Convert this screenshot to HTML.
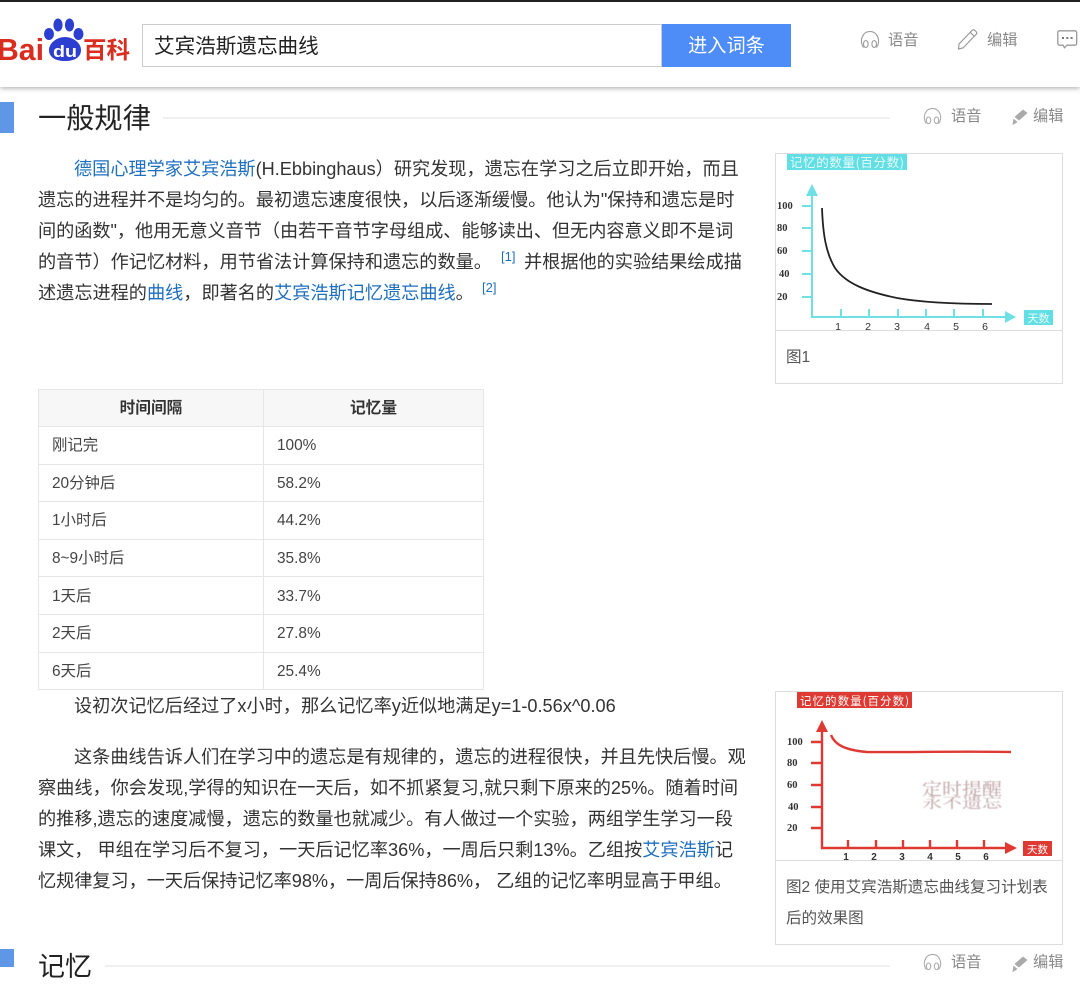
<!DOCTYPE html>
<html lang="zh-CN"><head><meta charset="utf-8"><title>艾宾浩斯遗忘曲线</title>
<style>
html,body{margin:0;padding:0;background:#fff}
body{position:relative;width:1080px;height:967px;overflow:hidden;font-family:"Liberation Sans","Noto Sans CJK SC",sans-serif;color:#333}
.t{position:absolute;white-space:nowrap;font-size:18.17px;line-height:30px;height:30px;color:#333}
a{color:#1f6fbf;text-decoration:none}
sup{position:absolute;font-size:13px;line-height:16px;color:#1f6fbf}
.abs{position:absolute}
.g{position:absolute;white-space:nowrap;font-size:15.2px;line-height:20px;color:#888}
.box{position:absolute;box-sizing:border-box;border:1px solid #ddd;background:#fff}
.cap{position:absolute;white-space:nowrap;font-size:15.55px;line-height:20px;color:#555}
table{position:absolute;left:38px;top:389px;width:446px;border-collapse:collapse;table-layout:fixed;font-size:15.4px;color:#444}
td,th{border:1px solid #e6e6e6;line-height:20px;text-align:left;font-weight:normal}
td{padding:2px 0 0 13px;height:34.6px}
th{background:#f7f7f7;text-align:center;font-weight:bold;padding:2px 0 0 0;height:34px;color:#333;font-size:15.7px}
svg.img{filter:blur(.35px)}
</style></head><body>

<div class="abs" style="left:0;top:0;width:1080px;height:87px;background:#fff;box-shadow:0 1px 5px rgba(0,0,0,.35)"></div>
<div class="abs" style="left:0;top:0;width:1080px;height:2px;background:#222"></div>

<svg class="abs" style="left:0;top:0" width="135" height="70" viewBox="0 0 135 70">
<g fill="#2c3fd0"><ellipse cx="58" cy="25" rx="4.600" ry="6.500"/><ellipse cx="69.500" cy="25" rx="4.600" ry="6.500"/><ellipse cx="49" cy="34" rx="5" ry="6"/><ellipse cx="78.500" cy="34" rx="5" ry="6"/>
<path d="M65 37C73 37 81 43 81 50C81 57 75 61 65 61C55 61 49 57 49 50C49 43 57 37 65 37Z"/></g>
<text x="-3" y="60" font-family="Liberation Sans" font-weight="bold" font-size="31" fill="#d92d20" textLength="47" lengthAdjust="spacingAndGlyphs">Bai</text>
<text x="53" y="57" font-family="Liberation Sans" font-weight="bold" font-size="17" fill="#fff" textLength="24" lengthAdjust="spacingAndGlyphs">du</text>
<text x="83" y="58" font-family="Noto Sans CJK SC" font-weight="bold" font-size="23.500" fill="#d92d20">百科</text>
</svg>

<div class="abs" style="left:142px;top:24px;width:520px;height:43px;box-sizing:border-box;border:1px solid #ccc;background:#fff"></div>
<div class="t" style="left:154px;top:32px;font-size:20.6px;color:#222">艾宾浩斯遗忘曲线</div>
<div class="abs" style="left:662px;top:24px;width:129px;height:43px;background:#4e8cf8;color:#fff;font-size:19.2px;line-height:45px;text-align:center">进入词条</div>

<svg class="abs" style="left:860px;top:30px" width="20" height="20" viewBox="0 0 20 20" fill="none" stroke="#999" stroke-width="1.100"><path d="M3.500 17.500C1 14 1 10 2 7.500C3.500 3.500 6.500 1.500 10 1.500S16.500 3.500 18 7.500C19 10 19 14 16.500 17.500"/><ellipse cx="5.800" cy="14" rx="2.300" ry="3.500"/><ellipse cx="14.200" cy="14" rx="2.300" ry="3.500"/></svg>
<div class="g" style="left:888px;top:31px">语音</div>
<svg class="abs" style="left:957px;top:28px" width="22" height="22" viewBox="0 0 22 22" fill="none" stroke="#999" stroke-width="1.200"><path d="M2 16L15 2.500c1-1 2-1 3 0l1 1c1 1 1 2 0 3L6 20l-4.500 1z"/><path d="M13.500 4.500l4 4"/></svg>
<div class="g" style="left:987px;top:31px">编辑</div>
<svg class="abs" style="left:1057px;top:30px" width="21" height="19" viewBox="0 0 21 19" fill="none" stroke="#999" stroke-width="1.300"><path d="M2.500 .8h15.500a1.700 1.700 0 0 1 1.700 1.700v11a1.700 1.700 0 0 1-1.700 1.700H10l-2.500 2.500-1.500-2.500H2.500A1.700 1.700 0 0 1 .8 13.500V2.500A1.700 1.700 0 0 1 2.500 .8z"/><path d="M5 8h2M9.300 8h2M13.600 8h2" stroke-width="2" stroke="#777"/></svg>

<div class="abs" style="left:0;top:102px;width:14px;height:31px;background:#5f96e6"></div>
<div class="t" style="left:38px;top:98px;font-size:28.2px;line-height:40px;height:40px;color:#222">一般规律</div>
<div class="abs" style="left:163px;top:117px;width:727px;height:2px;background:#efefef"></div>

<svg class="abs" style="left:923px;top:107px" width="19" height="19" viewBox="0 0 20 20" fill="none" stroke="#aaa" stroke-width="1.100"><path d="M3.500 17.500C1 14 1 10 2 7.500C3.500 3.500 6.500 1.500 10 1.500S16.500 3.500 18 7.500C19 10 19 14 16.500 17.500"/><ellipse cx="5.800" cy="14" rx="2.300" ry="3.500"/><ellipse cx="14.200" cy="14" rx="2.300" ry="3.500"/></svg>
<div class="g" style="left:951px;top:107px">语音</div>
<svg class="abs" style="left:1012px;top:108px" width="17" height="18" viewBox="0 0 17 18" fill="#aaa"><path d="M11 1.500L15.500 5 7 12.500 2.500 9z"/><path d="M1.500 10.500L5.500 14 2.500 16 .5 17z"/></svg>
<div class="g" style="left:1033px;top:107px">编辑</div>

<div class="t" style="left:74px;top:154px"><a>德国心理学家艾宾浩斯</a>(H.Ebbinghaus）研究发现，遗忘在学习之后立即开始，而且</div>
<div class="t" style="left:38px;top:185px">遗忘的进程并不是均匀的。最初遗忘速度很快，以后逐渐缓慢。他认为"保持和遗忘是时</div>
<div class="t" style="left:38px;top:216px;letter-spacing:-.03px">间的函数"，他用无意义音节（由若干音节字母组成、能够读出、但无内容意义即不是词</div>
<div class="t" style="left:38px;top:247px">的音节）作记忆材料，用节省法计算保持和遗忘的数量。</div>
<sup style="left:501px;top:249px">[1]</sup>
<div class="t" style="left:524px;top:247px">并根据他的实验结果绘成描</div>
<div class="t" style="left:38px;top:278px">述遗忘进程的<a>曲线</a>，即著名的<a>艾宾浩斯记忆遗忘曲线</a>。</div>
<sup style="left:482px;top:280px">[2]</sup>

<div class="box" style="left:775px;top:153px;width:288px;height:231px"></div>
<div class="abs" style="left:775px;top:330px;width:288px;height:1px;background:#ddd"></div>
<svg class="abs img" style="left:776px;top:154px" width="286" height="176" viewBox="776 154 286 176">
<rect x="787" y="154" width="120" height="16" fill="#62dfe4"/>
<text x="790" y="167" font-size="12.500" fill="#e8fbfb" font-family="Noto Sans CJK SC" textLength="114">记忆的数量(百分数)</text>
<g stroke="#6fe0e4" stroke-width="2" fill="none">
<path d="M812 192V317H1006"/>
<path d="M802 206H812M802 228H812M802 251H812M802 274H812M802 297H812M841 309V317M869 309V317M898 309V317M926 309V317M954 309V317M983 309V317"/></g>
<path d="M812 184L806 196H818ZM1016 317L1005 311V323Z" fill="#6fe0e4"/>
<path d="M822 208C823 235 826 253 835 268C846 284 868 292 897 298C925 303 960 304 992 304" fill="none" stroke="#222" stroke-width="1.800"/>
<g font-family="Liberation Serif" font-weight="bold" font-size="10.500" fill="#333"><text x="777" y="209">100</text><text x="777" y="231">80</text><text x="777" y="254">60</text><text x="779" y="277">40</text><text x="777" y="300">20</text></g>
<g font-family="Liberation Sans" font-size="10.500" fill="#333" text-anchor="middle"><text x="838" y="330">1</text><text x="868" y="330">2</text><text x="897" y="330">3</text><text x="927" y="330">4</text><text x="956" y="330">5</text><text x="985" y="330">6</text></g>
<rect x="1024" y="310" width="29" height="15" fill="#62dfe4"/>
<text x="1038.500" y="322" font-size="11" fill="#e8fbfb" font-family="Noto Sans CJK SC" text-anchor="middle">天数</text>
</svg>
<div class="cap" style="left:786px;top:348px">图1</div>

<table>
<colgroup><col style="width:225px"><col></colgroup>
<tr><th>时间间隔</th><th>记忆量</th></tr>
<tr><td>刚记完</td><td>100%</td></tr>
<tr><td>20分钟后</td><td>58.2%</td></tr>
<tr><td>1小时后</td><td>44.2%</td></tr>
<tr><td>8~9小时后</td><td>35.8%</td></tr>
<tr><td>1天后</td><td>33.7%</td></tr>
<tr><td>2天后</td><td>27.8%</td></tr>
<tr><td>6天后</td><td>25.4%</td></tr>
</table>

<div class="t" style="left:74px;top:691px">设初次记忆后经过了x小时，那么记忆率y近似地满足y=1-0.56x^0.06</div>
<div class="t" style="left:74px;top:742px">这条曲线告诉人们在学习中的遗忘是有规律的，遗忘的进程很快，并且先快后慢。观</div>
<div class="t" style="left:38px;top:773px">察曲线，你会发现,学得的知识在一天后，如不抓紧复习,就只剩下原来的25%。随着时间</div>
<div class="t" style="left:38px;top:804px">的推移,遗忘的速度减慢，遗忘的数量也就减少。有人做过一个实验，两组学生学习一段</div>
<div class="t" style="left:38px;top:835px">课文， 甲组在学习后不复习，一天后记忆率36%，一周后只剩13%。乙组按<a>艾宾浩斯</a>记</div>
<div class="t" style="left:38px;top:866px;letter-spacing:-.03px">忆规律复习，一天后保持记忆率98%，一周后保持86%， 乙组的记忆率明显高于甲组。</div>

<div class="box" style="left:775px;top:691px;width:288px;height:254px"></div>
<div class="abs" style="left:775px;top:860px;width:288px;height:1px;background:#ddd"></div>
<svg class="abs img" style="left:776px;top:692px" width="286" height="168" viewBox="776 692 286 168">
<defs><filter id="b"><feGaussianBlur stdDeviation="0.600"/></filter></defs>
<rect x="797" y="692" width="115" height="16" fill="#de3a33"/>
<text x="800" y="705" font-size="11.500" fill="#fff" font-family="Noto Sans CJK SC" textLength="109">记忆的数量(百分数)</text>
<g stroke="#de3a33" stroke-width="2.400" fill="none">
<path d="M822 730V848H1006"/>
<path d="M811 742H822M811 763H822M811 785H822M811 807H822M811 828H822M848 840V848M876 840V848M903 840V848M930 840V848M957 840V848M984 840V848"/>
<path d="M831 735C835 745 845 750 867 752C900 752.500 960 751 1011 752"/></g>
<path d="M822 720L816 732H828ZM1017 848L1005 842V854Z" fill="#de3a33"/>
<g font-family="Liberation Serif" font-weight="bold" font-size="10.500" fill="#333"><text x="787" y="745">100</text><text x="787" y="766">80</text><text x="787" y="788">60</text><text x="788" y="810">40</text><text x="787" y="831">20</text></g>
<g font-family="Liberation Sans" font-weight="bold" font-size="10" fill="#333" text-anchor="middle"><text x="846" y="860">1</text><text x="874" y="860">2</text><text x="902" y="860">3</text><text x="930" y="860">4</text><text x="958" y="860">5</text><text x="986" y="860">6</text></g>
<g font-family="Noto Serif CJK SC" fill="#a88" filter="url(#b)" opacity=".8"><text x="922" y="795" font-size="17" textLength="80" lengthAdjust="spacingAndGlyphs">定时提醒</text><text x="922" y="808" font-size="14" textLength="80" lengthAdjust="spacingAndGlyphs">永不遗忘</text></g>
<rect x="1023" y="841" width="29" height="15" fill="#de3a33"/>
<text x="1037.500" y="853" font-size="10.500" fill="#fff" font-family="Noto Sans CJK SC" text-anchor="middle">天数</text>
</svg>
<div class="cap" style="left:786px;top:878px">图2 使用艾宾浩斯遗忘曲线复习计划表</div>
<div class="cap" style="left:786px;top:909px">后的效果图</div>

<div class="abs" style="left:0;top:949px;width:14px;height:18px;background:#5f96e6"></div>
<div class="t" style="left:38px;top:947px;font-size:27px;line-height:40px;height:40px;color:#222">记忆</div>
<div class="abs" style="left:105px;top:965px;width:785px;height:2px;background:#efefef"></div>
<svg class="abs" style="left:923px;top:953px" width="19" height="19" viewBox="0 0 20 20" fill="none" stroke="#aaa" stroke-width="1.100"><path d="M3.500 17.500C1 14 1 10 2 7.500C3.500 3.500 6.500 1.500 10 1.500S16.500 3.500 18 7.500C19 10 19 14 16.500 17.500"/><ellipse cx="5.800" cy="14" rx="2.300" ry="3.500"/><ellipse cx="14.200" cy="14" rx="2.300" ry="3.500"/></svg>
<div class="g" style="left:951px;top:953px">语音</div>
<svg class="abs" style="left:1012px;top:955px" width="17" height="18" viewBox="0 0 17 18" fill="#aaa"><path d="M11 1.500L15.500 5 7 12.500 2.500 9z"/><path d="M1.500 10.500L5.500 14 2.500 16 .5 17z"/></svg>
<div class="g" style="left:1033px;top:953px">编辑</div>
</body></html>
